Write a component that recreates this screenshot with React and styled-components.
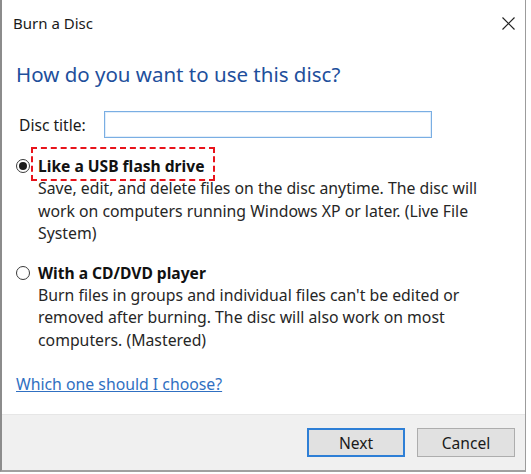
import React from "react";
import styled, { createGlobalStyle } from "styled-components";

const Global = createGlobalStyle`
  html, body { margin: 0; padding: 0; background: #ffffff; }
  body { font-family: "Noto Sans", "Open Sans", sans-serif; color: #1a1a1a; }
`;

const Window = styled.div`
  width: 523px;
  height: 470px;
  background: #ffffff;
  border-left: 2px solid #8c8c8c;
  border-right: 1px solid #9c9c9c;
  border-bottom: 2px solid #a0a0a0;
  display: flex;
  flex-direction: column;
  box-sizing: content-box;
`;

const TitleBar = styled.div`
  height: 46px;
  display: flex;
  align-items: center;
  justify-content: space-between;
  padding: 0 10px 0 11px;
`;

const TitleText = styled.div`
  font-size: 15px;
  color: #1a1a1a;
  margin-top: -1px;
`;

const CloseIcon = styled.svg`
  width: 13px;
  height: 13px;
`;

const Content = styled.div`
  flex: 1;
  padding: 14px 0 0 14px;
  display: flex;
  flex-direction: column;
`;

const Heading = styled.h1`
  margin: 0;
  font-weight: 400;
  font-size: 20.5px;
  line-height: 28px;
  color: #1e4f9c;
`;

const TitleRow = styled.div`
  display: flex;
  align-items: center;
  margin-top: 23px;
  gap: 18px;
  padding-left: 3px;
`;

const Label = styled.label`
  font-size: 15.6px;
  color: #1a1a1a;
`;

const TextInput = styled.input`
  width: 322px;
  height: 25px;
  box-sizing: content-box;
  border: 1px solid #7aaee3;
  padding: 0 2px;
  font: inherit;
  outline: none;
  box-shadow: inset 0 0 0 1px #e2eefa;
`;

const Option = styled.div`
  display: flex;
  flex-direction: column;
  margin-top: ${(p) => p.$top}px;
`;

const OptionHead = styled.div`
  display: flex;
  align-items: center;
  gap: 7px;
`;

const Radio = styled.span`
  width: 14px;
  height: 14px;
  box-sizing: border-box;
  border: 1px solid #3a3a3a;
  border-radius: 50%;
  background: #fff;
  display: flex;
  align-items: center;
  justify-content: center;
  flex: none;
  &::after {
    content: "";
    width: 8px;
    height: 8px;
    border-radius: 50%;
    background: ${(p) => (p.$checked ? "#1a1a1a" : "transparent")};
  }
`;

const OptionLabel = styled.span`
  position: relative;
  font-size: 15.6px;
  font-weight: 700;
  line-height: 22px;
  color: #111;
  padding: 0 1px;
`;

const Highlight = styled.span`
  position: absolute;
  left: -6px;
  top: -8px;
  width: 180px;
  height: 30px;
  border: 2px dashed #e8131b;
  pointer-events: none;
`;

const Description = styled.p`
  margin: 0 0 0 22px;
  font-size: 15.8px;
  line-height: 22.5px;
  color: #262626;
  max-width: 448px;
`;

const Link = styled.a`
  margin-top: 22px;
  font-size: 15.8px;
  line-height: 22px;
  color: #3070c2;
  text-decoration: underline;
  align-self: flex-start;
  cursor: pointer;
`;

const Footer = styled.div`
  height: 55px;
  background: #f0f0f0;
  border-top: 1px solid #e6e6e6;
  display: flex;
  align-items: center;
  justify-content: flex-end;
  gap: 12px;
  padding-right: 10px;
`;

const Button = styled.button`
  width: 98px;
  height: 29px;
  box-sizing: border-box;
  background: #e1e1e1;
  border: ${(p) => (p.$primary ? "2px solid #2e7fd6" : "1px solid #adadad")};
  font-family: inherit;
  font-size: 15.6px;
  color: #1a1a1a;
  padding: 0;
`;

export default function App() {
  return (
    <>
      <Global />
      <Window>
        <TitleBar>
          <TitleText>Burn a Disc</TitleText>
          <CloseIcon viewBox="0 0 13 13">
            <path d="M0.5 0.5 L12.5 12.5 M12.5 0.5 L0.5 12.5" stroke="#222" strokeWidth="1.2" />
          </CloseIcon>
        </TitleBar>
        <Content>
          <Heading>How do you want to use this disc?</Heading>
          <TitleRow>
            <Label>Disc title:</Label>
            <TextInput type="text" />
          </TitleRow>
          <Option $top={17}>
            <OptionHead>
              <Radio $checked />
              <OptionLabel>
                Like a USB flash drive
                <Highlight />
              </OptionLabel>
            </OptionHead>
            <Description>
              Save, edit, and delete files on the disc anytime. The disc will
              work on computers running Windows XP or later. (Live File System)
            </Description>
          </Option>
          <Option $top={17}>
            <OptionHead>
              <Radio />
              <OptionLabel>With a CD/DVD player</OptionLabel>
            </OptionHead>
            <Description>
              Burn files in groups and individual files can't be edited or
              removed after burning. The disc will also work on most computers.
              (Mastered)
            </Description>
          </Option>
          <Link>Which one should I choose?</Link>
        </Content>
        <Footer>
          <Button $primary>Next</Button>
          <Button>Cancel</Button>
        </Footer>
      </Window>
    </>
  );
}
